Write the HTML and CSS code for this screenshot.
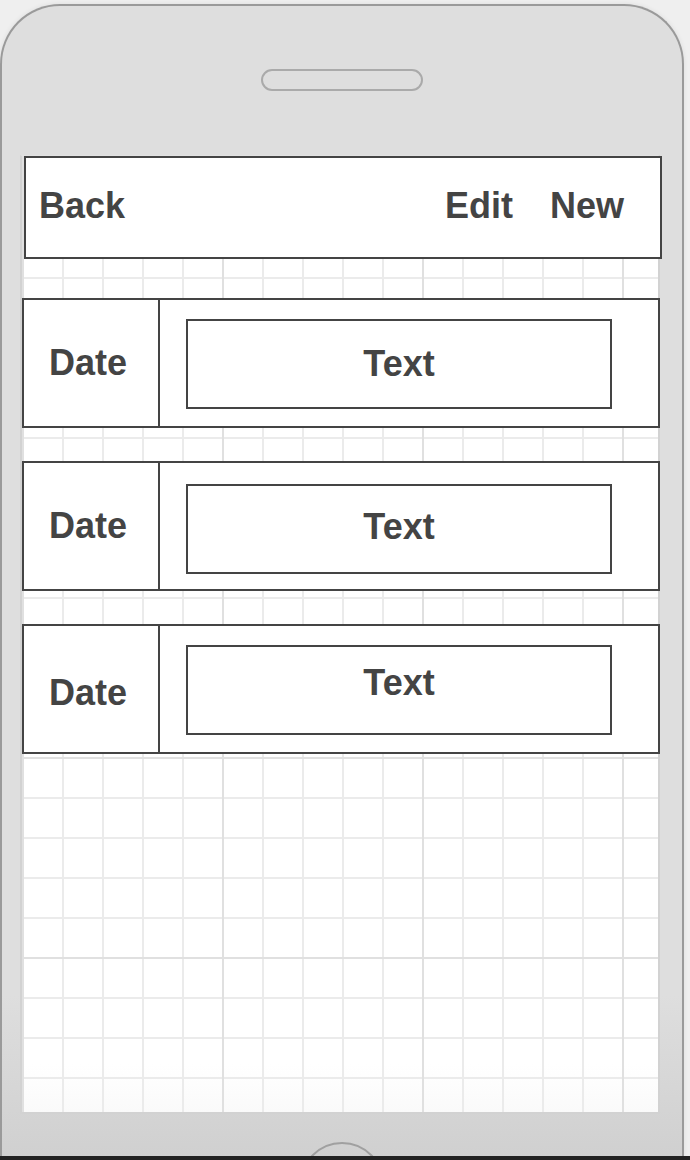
FILE: index.html
```html
<!DOCTYPE html>
<html lang="en">
<head>
<meta charset="utf-8">
<title>Mockup</title>
<link rel="stylesheet" href="styles.css">
</head>
<body>
  <div class="phone">
    <div class="speaker"></div>
    <div class="screen">
      <div class="navbar">
        <span class="nav-item">Back</span>
        <span class="nav-item nav-edit">Edit</span>
        <span class="nav-item nav-new">New</span>
      </div>
      <div class="list">
        <div class="row">
          <div class="date-cell">Date</div>
          <div class="text-cell"><div class="text-box">Text</div></div>
        </div>
        <div class="row row-middle">
          <div class="date-cell">Date</div>
          <div class="text-cell"><div class="text-box">Text</div></div>
        </div>
        <div class="row row-last">
          <div class="date-cell">Date</div>
          <div class="text-cell"><div class="text-box">Text</div></div>
        </div>
      </div>
    </div>
    <div class="home-button"></div>
  </div>
  <div class="bottom-bar"></div>
</body>
</html>
```
FILE: styles.css
```css
* { box-sizing: border-box; }

html, body {
  margin: 0;
  padding: 0;
  height: 100%;
  overflow: hidden;
}

body {
  background: #efefef;
  font-family: "Liberation Sans", Arial, sans-serif;
  font-weight: 700;
  color: #444;
}

.phone {
  width: 684px;
  height: 1152px;
  margin: 4px 0 0 0;
  border: 2px solid #9a9a9a;
  border-bottom: 0;
  border-radius: 60px 60px 0 0;
  background: linear-gradient(to bottom, #dedede 0, #dedede 86%, #d0d0d0 100%);
  box-shadow: 0 0 5px rgba(0, 0, 0, 0.08);
  overflow: hidden;
  display: flex;
  flex-direction: column;
}

.speaker {
  width: 162px;
  height: 22px;
  margin: 63px auto 0 auto;
  border: 2px solid #aaa;
  border-radius: 11px;
  flex-shrink: 0;
}

.screen {
  width: 640px;
  height: 959px;
  margin: 64px 0 0 18px;
  flex-shrink: 0;
  border: 2px solid #d2d2d2;
  border-top: 1px solid #e2e2e2;
  background-color: #fff;
  background-image:
    linear-gradient(90deg, #e0e0e0 2px, transparent 2px),
    linear-gradient(#e0e0e0 2px, transparent 2px),
    linear-gradient(90deg, #ebebeb 2px, transparent 2px),
    linear-gradient(#ebebeb 2px, transparent 2px),
    linear-gradient(#fff 95%, #fafafa 100%);
  background-size: 200px 200px, 200px 200px, 40px 40px, 40px 40px, 100% 100%;
  background-position: 0 1px, 0 1px, 0 1px, 0 1px, 0 0;
}

.navbar {
  width: 638px;
  height: 103px;
  margin-left: 2px;
  border: 2px solid #444;
  background: #fff;
  display: flex;
  align-items: center;
  padding: 0 36px 4px 13px;
}

.nav-item {
  font-size: 36px;
  line-height: 1;
}

.nav-edit { margin-left: auto; }
.nav-new { margin-left: 37px; }

.list {
  display: flex;
  flex-direction: column;
  gap: 33px;
  margin-top: 39px;
}

.row {
  width: 638px;
  height: 130px;
  border: 2px solid #444;
  background: #fff;
  display: flex;
}

.date-cell {
  width: 136px;
  border-right: 2px solid #444;
  display: flex;
  align-items: center;
  justify-content: center;
  padding-right: 6px;
  font-size: 36px;
  line-height: 1;
}

.text-cell {
  flex: 1;
  display: flex;
  align-items: center;
  padding-left: 26px;
  padding-top: 2px;
}

.text-box {
  width: 426px;
  height: 90px;
  border: 2px solid #444;
  display: flex;
  align-items: center;
  justify-content: center;
  font-size: 36px;
  line-height: 1;
}

.row-middle .text-cell { padding-top: 6px; }
.row-middle .text-box { padding-bottom: 4px; }
.row-last .date-cell { padding-top: 8px; }
.row-last .text-box { padding-bottom: 14px; }

.home-button {
  width: 84px;
  height: 84px;
  margin: 28px 0 0 298px;
  border: 2px solid #a0a0a0;
  border-radius: 50%;
  flex-shrink: 0;
}

.bottom-bar {
  height: 10px;
  background: #222;
}
```
